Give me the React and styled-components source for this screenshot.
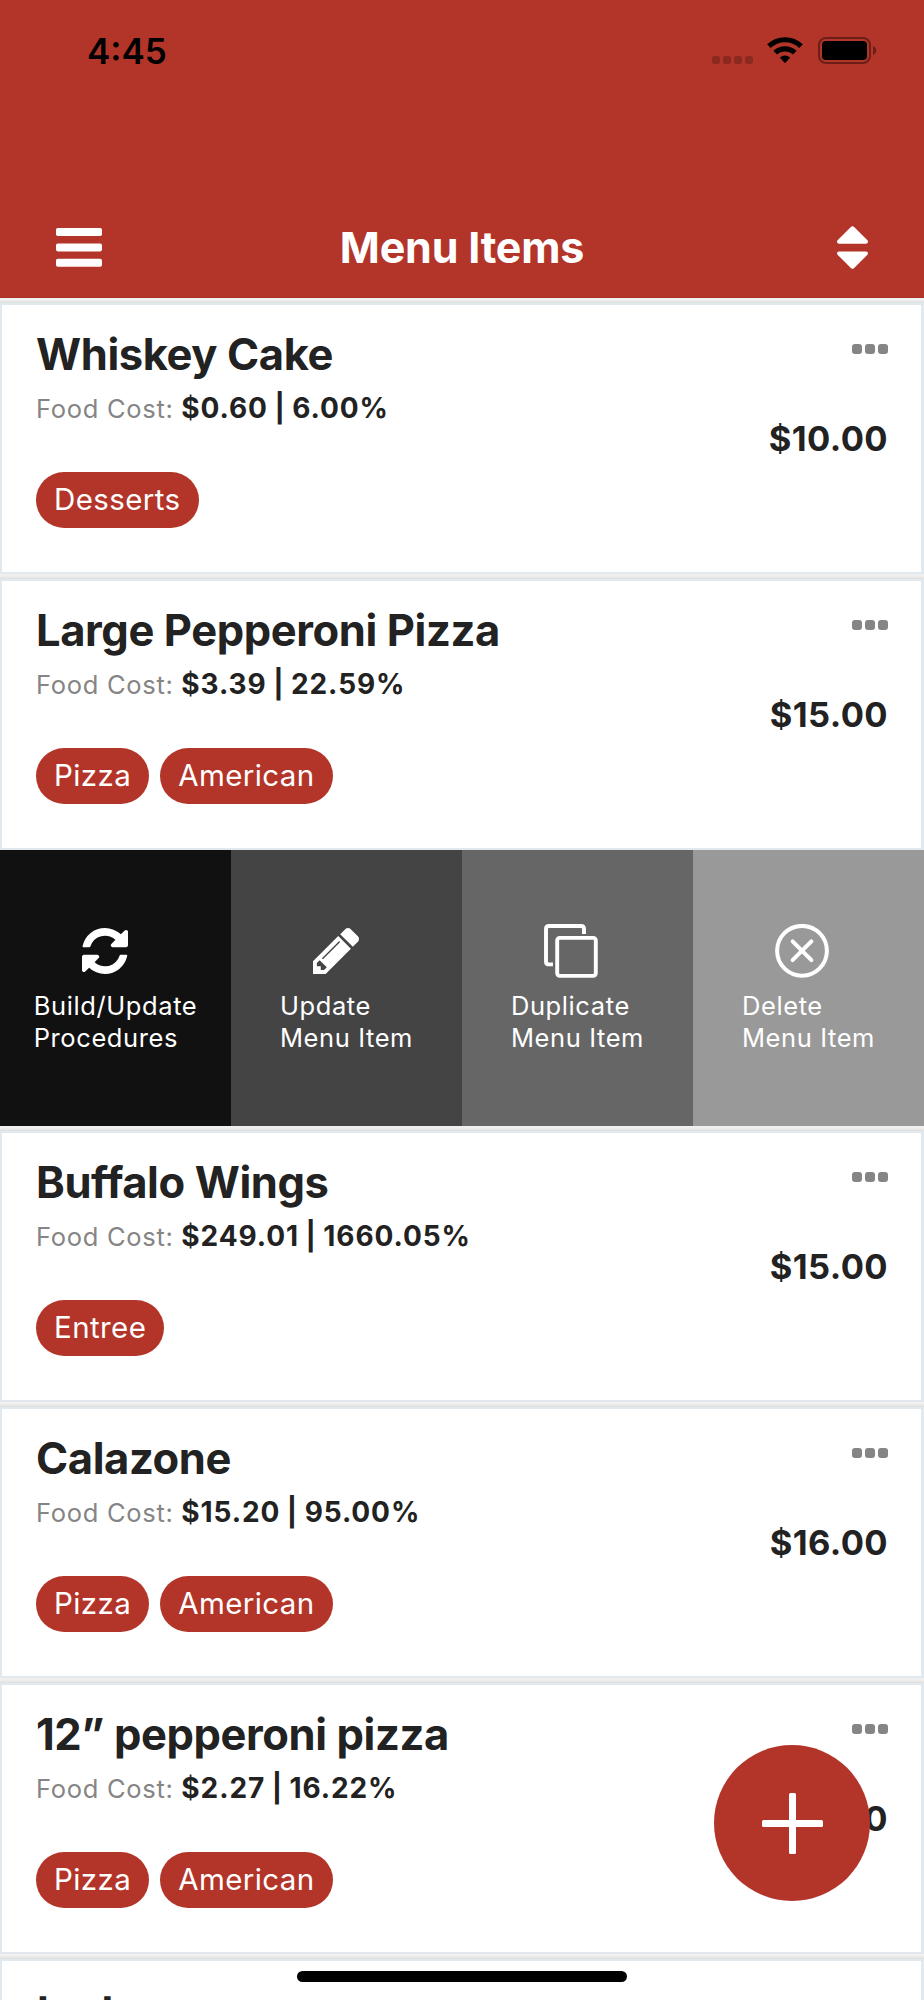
import React from 'react'
import styled, { createGlobalStyle } from 'styled-components'


const brand = '#b33529';

const menuItems = [
    { id: 1, name: 'Whiskey Cake', cost: '$0.60', percent: '6.00%', price: '$10.00', tags: ['Desserts'] },
    { id: 2, name: 'Large Pepperoni Pizza', cost: '$3.39', percent: '22.59%', price: '$15.00', tags: ['Pizza', 'American'] },
    { id: 3, swiped: true },
    { id: 4, name: 'Buffalo Wings', cost: '$249.01', percent: '1660.05%', price: '$15.00', tags: ['Entree'] },
    { id: 5, name: 'Calazone', cost: '$15.20', percent: '95.00%', price: '$16.00', tags: ['Pizza', 'American'] },
    { id: 6, name: '12” pepperoni pizza', cost: '$2.27', percent: '16.22%', price: '$14.00', tags: ['Pizza', 'American'] },
    { id: 7, name: 'test', tags: [] },
]


const WifiIcon = () => (
    <svg width="36" height="27" viewBox="0 0 36 27" fill="none" stroke="#000" strokeWidth="5.2">
        <path d="M1.9 9.2 A23.3 23.3 0 0 1 34.1 9.2" />
        <path d="M8.2 15.7 A14.2 14.2 0 0 1 27.8 15.7" />
        <path d="M12.8 20.6 Q18 16.6 23.2 20.6 L18.7 25.6 Q18 26.4 17.3 25.6 Z" fill="#000" stroke="none" />
    </svg>
)

const BatteryIcon = () => (
    <svg width="59" height="27" viewBox="0 0 59 27">
        <rect x="1" y="1" width="51" height="25" rx="7" fill="none" stroke="#000" strokeOpacity=".4" strokeWidth="2" />
        <rect x="4" y="4" width="45" height="19" rx="4" fill="#000" />
        <path d="M55 9 Q58.3 10.5 58.3 13.5 T55 18 Z" fill="#000" fillOpacity=".4" />
    </svg>
)

const BarsIcon = () => (
    <svg width="46" height="39" viewBox="0 0 46 39" fill="#fff">
        <rect width="46" height="8" rx="1.8" />
        <rect y="15.4" width="46" height="8" rx="1.8" />
        <rect y="30.8" width="46" height="8" rx="1.8" />
    </svg>
)

const SortIcon = () => (
    <svg width="31" height="43" viewBox="0 192 1024 1408" fill="#fff">
        <path d="M1024 1088q0 26-19 45l-448 448q-19 19-45 19t-45-19L19 1133q-19-19-19-45t19-45 45-19h896q26 0 45 19t19 45zm0-384q0 26-19 45t-45 19H64q-26 0-45-19T0 704t19-45l448-448q19-19 45-19t45 19l448 448q19 19 19 45z" />
    </svg>
)

const RefreshIcon = () => (
    <svg width="46" height="46" viewBox="0 0 1536 1536" fill="#fff">
        <path d="M1511 928q0 5-1 7-64 268-268 434.5t-478 166.5q-146 0-282.5-55t-243.5-157l-129 129q-19 19-45 19t-45-19-19-45v-448q0-26 19-45t45-19h448q26 0 45 19t19 45-19 45l-137 137q71 66 161 102t187 36q134 0 250-65t186-179q11-17 53-117 8-23 30-23h192q13 0 22.5 9.5t9.5 22.5zm25-800v448q0 26-19 45t-45 19h-448q-26 0-45-19t-19-45 19-45l138-138q-148-137-349-137-134 0-250 65t-186 179q-11 17-53 117-8 23-30 23h-199q-13 0-22.5-9.5t-9.5-22.5v-7q65-268 270-434.5t480-166.5q146 0 284 55.5t245 156.5l130-129q19-19 45-19t45 19 19 45z" />
    </svg>
)

const PencilIcon = () => (
    <svg width="46" height="46" viewBox="0 149 1515 1515" fill="#fff">
        <path d="M363 1536l91-91-235-235-91 91v107h128v128h107zm523-928q0-22-22-22-10 0-17 7l-542 542q-7 7-7 17 0 22 22 22 10 0 17-7l542-542q7-7 7-17zm-54-192l416 416-832 832H0v-416zm683 96q0 53-37 90l-166 166-416-416 166-165q36-38 90-38 53 0 91 38l235 234q37 39 37 91z" />
    </svg>
)

const CopyIcon = () => (
    <svg width="54" height="54" viewBox="0 0 54 54" fill="none" stroke="#fff" strokeWidth="3.9">
        <rect x="13.2" y="13.9" width="38.6" height="38" rx="2.6" />
        <path d="M40 10 V5 Q40 2 37 2 H5 Q2 2 2 5 V37.4 Q2 40.4 5 40.4 H9" />
    </svg>
)

const CloseCircleIcon = () => (
    <svg width="54" height="54" viewBox="0 0 54 54" fill="none" stroke="#fff" strokeWidth="4" strokeLinecap="round">
        <circle cx="27" cy="26.8" r="24.9" />
        <path d="M17.6 17.4 L36.4 36.2 M36.4 17.4 L17.6 36.2" />
    </svg>
)


const actions = [
    { color: '#111', icon: <RefreshIcon />, lines: ['Build/Update', 'Procedures'] },
    { color: '#444', icon: <PencilIcon />, lines: ['Update', 'Menu Item'] },
    { color: '#666', icon: <CopyIcon />, lines: ['Duplicate', 'Menu Item'] },
    { color: '#999', icon: <CloseCircleIcon />, lines: ['Delete', 'Menu Item'] },
]


const SwipeActions = () => (
    <ActionRow>
        {actions.map(({ color, icon, lines }) => (
            <Action key={color} color={color}>
                <ActionIcon>{icon}</ActionIcon>
                <ActionLabel>
                    {lines[0]}<br />{lines[1]}
                </ActionLabel>
            </Action>
        ))}
    </ActionRow>
)


const MenuCard = ({ item }) => {
    return (
        <CardRow>
            <Card>
                <CardInfo>
                    <CardTitle>{item.name}</CardTitle>
                    {item.cost && <FoodCost>Food Cost: <b>{item.cost} | {item.percent}</b></FoodCost>}
                    <Tags>
                        {item.tags.map(tag => <Tag key={tag}>{tag}</Tag>)}
                    </Tags>
                </CardInfo>
                <CardSide>
                    <More><i /><i /><i /></More>
                    <Price>{item.price}</Price>
                </CardSide>
            </Card>
        </CardRow>
    )
}


const App = () => {
    return (
        <Screen>
            <GlobalStyle />
            <Header>
                <StatusBar>
                    <Time>4:45</Time>
                    <StatusIcons>
                        <Signal><i /><i /><i /><i /></Signal>
                        <WifiIcon />
                        <BatteryIcon />
                    </StatusIcons>
                </StatusBar>
                <NavBar>
                    <BarsIcon />
                    <NavTitle>Menu Items</NavTitle>
                    <SortIcon />
                </NavBar>
            </Header>

            {menuItems.map(item => item.swiped
                ? <SwipeActions key={item.id} />
                : <MenuCard key={item.id} item={item} />
            )}

            <AddButton>
                <svg width="61" height="61" viewBox="0 0 61 61" fill="#fff">
                    <rect x="0" y="27" width="61" height="7" rx="1.5" />
                    <rect x="27" y="0" width="7" height="61" rx="1.5" />
                </svg>
            </AddButton>
            <HomeIndicator />
        </Screen>
    )
}


const GlobalStyle = createGlobalStyle`
* {
    box-sizing: border-box;
}
body {
    margin: 0;
    background-color: #fff;
    font-family: Inter, 'Liberation Sans', sans-serif;
}
`

const Screen = styled.div`
position: relative;
width: 924px;
height: 2000px;
overflow: hidden;
color: #222;
`

const Header = styled.header`
height: 298px;
display: flex;
flex-direction: column;
justify-content: space-between;
background-color: ${brand};
box-shadow: inset 0 -1px 0 #a93024;
`

const StatusBar = styled.div`
height: 101px;
display: flex;
align-items: center;
justify-content: space-between;
padding: 0 47px 0 87px;
`

const Time = styled.span`
font-size: 35px;
font-weight: 600;
color: #000;
`

const StatusIcons = styled.div`
display: flex;
align-items: center;
gap: 15px;

svg {
    display: block;
}
`

const Signal = styled.div`
display: flex;
gap: 3px;
align-self: flex-end;
margin-right: -1px;

i {
    width: 8px;
    height: 8px;
    border-radius: 2.5px;
    background-color: rgba(0,0,0,0.22);
}
`

const NavBar = styled.nav`
height: 102px;
display: grid;
grid-template-columns: 46px 1fr 46px;
align-items: center;
justify-items: end;
padding: 0 56px;
color: #fff;
`

const NavTitle = styled.h1`
justify-self: center;
margin: 0;
font-size: 43px;
font-weight: 700;
letter-spacing: -.2px;
`

const CardRow = styled.div`
height: 276px;
padding-top: 5px;
background: linear-gradient(#f1f1f1, #efefee 40%, #dcdedd) no-repeat 0 0 / 100% 5px;
`

const Card = styled.div`
height: 271px;
display: flex;
justify-content: space-between;
border: 2px solid #e1e8ee;
border-right-width: 3px;
background-color: #fff;
padding: 24px 33px 0 34px;
`

const CardInfo = styled.div`
display: flex;
flex-direction: column;
`

const CardTitle = styled.h2`
margin: 0;
font-size: 43.5px;
line-height: 51px;
font-weight: 700;
letter-spacing: -.4px;
`

const FoodCost = styled.p`
margin: 11px 0 0;
font-size: 25.5px;
line-height: 34px;
letter-spacing: .7px;
color: #858585;

b {
    font-size: 28px;
    font-weight: 700;
    letter-spacing: .9px;
    word-spacing: -1px;
    color: #222;
}
`

const Tags = styled.div`
display: flex;
gap: 11px;
margin-top: 46px;
`

const Tag = styled.span`
height: 56px;
padding: 0 18px;
border-radius: 28px;
background-color: ${brand};
color: #fff;
font-size: 29.5px;
line-height: 55px;
letter-spacing: .4px;
`

const CardSide = styled.div`
display: flex;
flex-direction: column;
align-items: flex-end;
padding-top: 15px;
`

const More = styled.div`
display: flex;
gap: 3px;

i {
    width: 10px;
    height: 10px;
    border-radius: 3px;
    background-color: #858585;
}
`

const Price = styled.span`
margin-top: 64px;
font-size: 34.5px;
line-height: 42px;
font-weight: 700;
letter-spacing: .4px;
`

const ActionRow = styled.div`
height: 276px;
display: grid;
grid-template-columns: repeat(4, 1fr);
`

const Action = styled.div`
display: flex;
flex-direction: column;
padding-top: 74px;
background-color: ${props => props.color};
color: #fff;
`

const ActionIcon = styled.div`
height: 54px;
display: flex;
align-items: center;
padding-left: 82px;
`

const ActionLabel = styled.div`
align-self: center;
margin-top: 12px;
font-size: 25.5px;
line-height: 32px;
letter-spacing: .6px;
`

const AddButton = styled.div`
position: absolute;
left: 714px;
top: 1745px;
width: 156px;
height: 156px;
border-radius: 50%;
background-color: ${brand};
display: flex;
align-items: center;
justify-content: center;
`

const HomeIndicator = styled.div`
position: absolute;
left: 297px;
bottom: 18px;
width: 330px;
height: 11px;
border-radius: 6px;
background-color: #000;
`


export default App
